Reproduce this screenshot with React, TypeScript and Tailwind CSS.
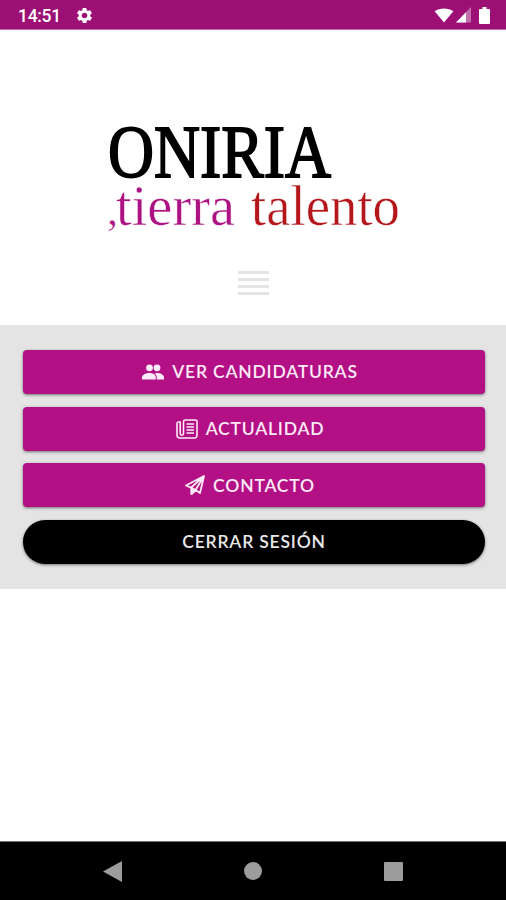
import type { ReactNode } from "react";
import { MdSettings } from "react-icons/md";
import clsx from "clsx";

function StatusBar() {
  return (
    <header className="flex h-[30px] items-center justify-between border-b border-[#c46aae] bg-[#9c0f74] pr-4 pl-[18px] text-white">
      <div className="flex items-center gap-[14px] pt-[2px]">
        <span className="font-['Roboto',sans-serif] text-[17.5px] leading-5 font-medium tracking-[-0.3px]">14:51</span>
        <MdSettings className="size-[19px]" />
      </div>
      <div className="flex items-center pt-[1px]">
        <svg className="h-[15px] w-[20px]" viewBox="0 0 20 16" fill="currentColor">
          <path d="M0 3.5C5.5-.6 14.5-.6 20 3.5L10 15.5Z" />
        </svg>
        <svg className="ml-[2px] h-[16px] w-[15px]" viewBox="0 0 15 16" fill="currentColor">
          <path d="M15 0V15.5H0Z" opacity="0.4" />
          <path d="M10 5.2V15.5H0Z" />
        </svg>
        <svg className="ml-[8px] h-[17px] w-[11px]" viewBox="0 0 11 17" fill="currentColor">
          <path d="M3.5 0h4v2H10a1 1 0 0 1 1 1v13a1 1 0 0 1-1 1H1a1 1 0 0 1-1-1V3a1 1 0 0 1 1-1h2.5z" />
        </svg>
      </div>
    </header>
  );
}

function Logo() {
  return (
    <svg
      className="h-[120px] w-[310px] overflow-visible font-['Liberation_Serif',serif]"
      viewBox="98 117 310 120"
    >
      <text x="108" y="177" fontSize="73" textLength="223" lengthAdjust="spacingAndGlyphs" stroke="#000" strokeWidth="1.8">
        ONIRIA
      </text>
      <g stroke="#fff" strokeWidth="0.5">
        <text x="107" y="225" fontSize="44" fill="#ad1283">
          ,
        </text>
        <text x="116" y="225" fontSize="58" textLength="119" lengthAdjust="spacingAndGlyphs" fill="#ad1283">
          tierra
        </text>
        <text x="251" y="225" fontSize="58" textLength="149" lengthAdjust="spacingAndGlyphs" fill="#b5161b">
          talento
        </text>
      </g>
    </svg>
  );
}

function PeopleIcon() {
  return (
    <svg className="h-[16px] w-[22px]" viewBox="0 0 22 16" fill="currentColor">
      <circle cx="7.5" cy="3.8" r="3.4" />
      <circle cx="15" cy="3.8" r="3.4" />
      <path d="M0 15.500v-2.200C0 10.400 4.500 9 7.500 9c2.800 0 6.300 1.300 6.300 4.300v2.200z" />
      <path d="M14.800 15.500v-2.200c0-1.700-.8-3-2-3.900C13.600 9.100 14.400 9 15 9c2.800 0 7 1.400 7 4.300v2.200z" />
    </svg>
  );
}

function NewspaperIcon() {
  return (
    <svg className="h-[20px] w-[22px]" viewBox="0 0 22 20" fill="none" stroke="currentColor" strokeWidth="1.6">
      <path d="M7.5 14.5V2.5A1.5 1.5 0 0 1 9 1h10.5A1.5 1.5 0 0 1 21 2.5v14a2.5 2.5 0 0 1-2.5 2.5H4a3 3 0 0 1-3-3V4.500A1.500 1.500 0 0 1 2.500 3H4.200v11.500a1.650 1.650 0 0 0 3.300 0z" />
      <path d="M10.500 5H18M10.500 8H18M10.500 11H18M10.500 14H18" />
    </svg>
  );
}

function PlaneIcon() {
  return (
    <svg className="size-[20px]" viewBox="0 0 20 20" fill="none" stroke="currentColor" strokeWidth="1.8" strokeLinejoin="round">
      <path d="M19 1L1 10.500l5 2.200L19 1l-4 17-4.500-3-4 4V12.700M19 1l-8.500 14" />
      <path d="M6.500 12.700l4 2.300-4 4z" fill="currentColor" />
    </svg>
  );
}

type MenuButtonProps = {
  icon?: ReactNode;
  dark?: boolean;
  children: ReactNode;
};

function MenuButton({ icon, dark, children }: MenuButtonProps) {
  return (
    <button
      className={clsx(
        "flex h-[44px] w-full items-center justify-center gap-[8px] font-['Lato',sans-serif] text-[17.5px] font-semibold tracking-[0.8px] shadow-[0_1px_3px_rgba(0,0,0,0.5)]",
        dark ? "rounded-full bg-black text-[#e8e8e8]" : "rounded-[4px] bg-[#b41085] pr-[8px] text-[#fdeaf8]",
      )}
    >
      {icon}
      <span className="pt-[1px]">{children}</span>
    </button>
  );
}

export default function App() {
  return (
    <div className="flex h-[900px] w-[506px] flex-col overflow-hidden bg-white">
      <StatusBar />

      <div className="flex h-[295px] flex-col items-center pt-[87px]">
        <Logo />
        <div className="mt-[34px] flex w-[31px] flex-col gap-[4px]">
          <div className="h-[3px] bg-[#e4e4e4]" />
          <div className="h-[3px] bg-[#e4e4e4]" />
          <div className="h-[3px] bg-[#e4e4e4]" />
          <div className="h-[3px] bg-[#e4e4e4]" />
        </div>
      </div>

      <main className="flex h-[264px] flex-col gap-[12.6px] bg-[#e4e4e4] pt-[25px] pr-[21px] pl-[23px]">
        <MenuButton icon={<PeopleIcon />}>VER CANDIDATURAS</MenuButton>
        <MenuButton icon={<NewspaperIcon />}>ACTUALIDAD</MenuButton>
        <MenuButton icon={<PlaneIcon />}>CONTACTO</MenuButton>
        <MenuButton dark>CERRAR SESIÓN</MenuButton>
      </main>

      <nav className="mt-auto flex h-[59px] items-center justify-between border-t border-[#777] bg-black px-[103px]">
        <svg className="h-[21px] w-[19px] text-[#9c9c9c]" viewBox="0 0 19 21" fill="currentColor">
          <path d="M19 0v21L0 10.5z" />
        </svg>
        <div className="size-[18px] rounded-full bg-[#9c9c9c]" />
        <div className="size-[19px] rounded-[1px] bg-[#9c9c9c]" />
      </nav>
    </div>
  );
}
